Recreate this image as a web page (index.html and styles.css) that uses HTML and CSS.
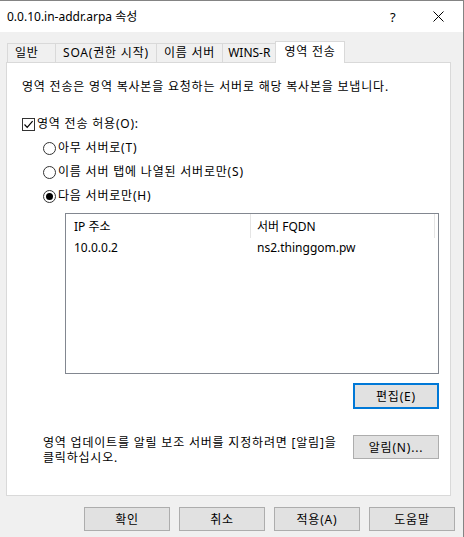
FILE: index.html
```html
<!DOCTYPE html>
<html lang="ko">
<head>
    <meta charset="UTF-8">
    <meta name="viewport" content="width=device-width, initial-scale=1.0">
    <title>0.0.10.in-addr.arpa 속성</title>
    <link rel="stylesheet" href="styles.css">
</head>
<body>
    <div class="window">
        <!-- 제목 표시줄 -->
        <div class="titlebar">
            <span class="title">0.0.10.in-addr.arpa 속성</span>
            <span class="help">?</span>
            <span class="close">
                <svg width="11" height="11" viewBox="0 0 11 11"><path d="M0.5 0.5 L10.5 10.5 M10.5 0.5 L0.5 10.5" stroke="#000" stroke-width="1"/></svg>
            </span>
        </div>

        <!-- 탭 -->
        <div class="tabs">
            <div class="tab">일반</div>
            <div class="tab">SOA(권한 시작)</div>
            <div class="tab">이름 서버</div>
            <div class="tab latin">WINS-R</div>
            <div class="tab active">영역 전송</div>
        </div>

        <div class="panel">
            <p class="desc">영역 전송은 영역 복사본을 요청하는 서버로 해당 복사본을 보냅니다.</p>

            <label class="check-row">
                <span class="checkbox">
                    <svg width="11" height="11" viewBox="0 0 11 11"><path d="M1.5 5.5 L4.2 8.3 L9.6 2.2" fill="none" stroke="#000" stroke-width="1.2"/></svg>
                </span>
                영역 전송 허용(O):
            </label>

            <div class="radios">
                <label class="radio-row"><span class="radio"></span>아무 서버로(T)</label>
                <label class="radio-row"><span class="radio"></span>이름 서버 탭에 나열된 서버로만(S)</label>
                <label class="radio-row"><span class="radio checked"></span>다음 서버로만(H)</label>
            </div>

            <!-- 서버 목록 -->
            <div class="listview">
                <div class="lv-head">
                    <div class="col col-ip">IP 주소</div>
                    <div class="col col-fqdn">서버 FQDN</div>
                </div>
                <div class="lv-row">
                    <div class="col col-ip">10.0.0.2</div>
                    <div class="col col-fqdn">ns2.thinggom.pw</div>
                </div>
            </div>

            <div class="edit-row">
                <button class="btn default">편집(E)</button>
            </div>

            <div class="notify-row">
                <p class="notify-text">영역 업데이트를 알릴 보조 서버를 지정하려면 [알림]을<br>클릭하십시오.</p>
                <button class="btn">알림(N)...</button>
            </div>
        </div>

        <div class="footer">
            <button class="btn">확인</button>
            <button class="btn">취소</button>
            <button class="btn">적용(A)</button>
            <button class="btn">도움말</button>
        </div>
    </div>
</body>
</html>
```

FILE: styles.css
```css
html, body {
    margin: 0;
    padding: 0;
}

body {
    width: 464px;
    height: 537px;
    overflow: hidden;
    background-color: #f0f0f0;
    font-family: "Noto Sans", "Noto Sans CJK KR", sans-serif;
    font-size: 12px;
    color: #000;
}

.window {
    box-sizing: border-box;
    width: 464px;
    height: 537px;
    border-top: 1px solid #848484;
    border-right: 1px solid #848484;
    background-color: #f0f0f0;
    display: flex;
    flex-direction: column;
}

/* 제목 표시줄 */
.titlebar {
    height: 31px;
    background-color: #fff;
    display: flex;
    align-items: center;
    padding-left: 7px;
}

.title {
    flex: 1;
    line-height: 16px;
}

.help {
    width: 14px;
    margin-right: 29px;
    font-size: 13px;
}

.close {
    width: 11px;
    height: 11px;
    margin-right: 19px;
    display: flex;
}

/* 탭 */
.tabs {
    display: flex;
    align-items: flex-end;
    height: 21px;
    margin-top: 9px;
    padding-left: 7px;
    position: relative;
    z-index: 1;
}

.tab {
    height: 19px;
    min-width: 49px;
    box-sizing: border-box;
    border: 1px solid #d9d9d9;
    border-bottom: none;
    margin-right: -1px;
    padding: 0 7px;
    line-height: 18px;
    letter-spacing: 0.8px;
    background-color: #f0f0f0;
}

.tab.latin {
    letter-spacing: 0;
    padding: 0 5px;
}

.tab.active {
    height: 22px;
    margin-bottom: -1px;
    background-color: #fff;
    padding: 1px 8px 0;
}

.panel {
    box-sizing: border-box;
    height: 434px;
    margin: 0 12px 0 6px;
    border: 1px solid #d9d9d9;
    background-color: #fff;
    display: flex;
    flex-direction: column;
    letter-spacing: 0.8px;
}

.desc {
    margin: 16px 0 0 15px;
    line-height: 16px;
}

.check-row,
.radio-row {
    display: flex;
    align-items: center;
    height: 16px;
    line-height: 16px;
}

.check-row {
    margin: 21px 0 0 15px;
}

.checkbox {
    box-sizing: border-box;
    width: 13px;
    height: 13px;
    border: 1px solid #333;
    margin-right: 2px;
    display: flex;
}

.radios {
    display: flex;
    flex-direction: column;
    gap: 8px;
    margin: 8px 0 0 36px;
}

.radio {
    box-sizing: border-box;
    width: 13px;
    height: 13px;
    border: 1px solid #333;
    border-radius: 50%;
    margin-right: 2px;
    display: flex;
    align-items: center;
    justify-content: center;
}

.radio.checked::after {
    content: "";
    width: 7px;
    height: 7px;
    border-radius: 50%;
    background-color: #000;
}

/* 서버 목록 */
.listview {
    box-sizing: border-box;
    height: 161px;
    margin: 9px 11px 0 58px;
    border: 1px solid #828790;
    letter-spacing: 0;
}

.lv-head,
.lv-row {
    display: flex;
}

.lv-head {
    height: 24px;
}

.lv-head .col {
    padding-top: 2px;
    line-height: 22px;
    border-right: 1px solid #e5e5e5;
}

.lv-row {
    height: 20px;
    line-height: 20px;
}

.col {
    box-sizing: border-box;
    padding-left: 8px;
}

.col-ip {
    width: 185px;
}

.col-fqdn {
    width: 184px;
    padding-left: 6px;
}

.btn {
    box-sizing: border-box;
    width: 86px;
    height: 24px;
    padding: 0;
    border: 1px solid #adadad;
    background-color: #e1e1e1;
    font-family: inherit;
    font-size: 12px;
    letter-spacing: 0.8px;
    color: #000;
}

.btn.default {
    height: 26px;
    border: 2px solid #0078d7;
}

.edit-row {
    display: flex;
    justify-content: flex-end;
    margin: 9px 11px 0 0;
}

.notify-row {
    display: flex;
    justify-content: space-between;
    align-items: flex-start;
    margin: 26px 11px 0 36px;
}

.notify-text {
    margin: 0;
    line-height: 15px;
}

.footer {
    display: flex;
    justify-content: flex-end;
    gap: 9px;
    margin-top: 11px;
    padding-right: 8px;
}
```
